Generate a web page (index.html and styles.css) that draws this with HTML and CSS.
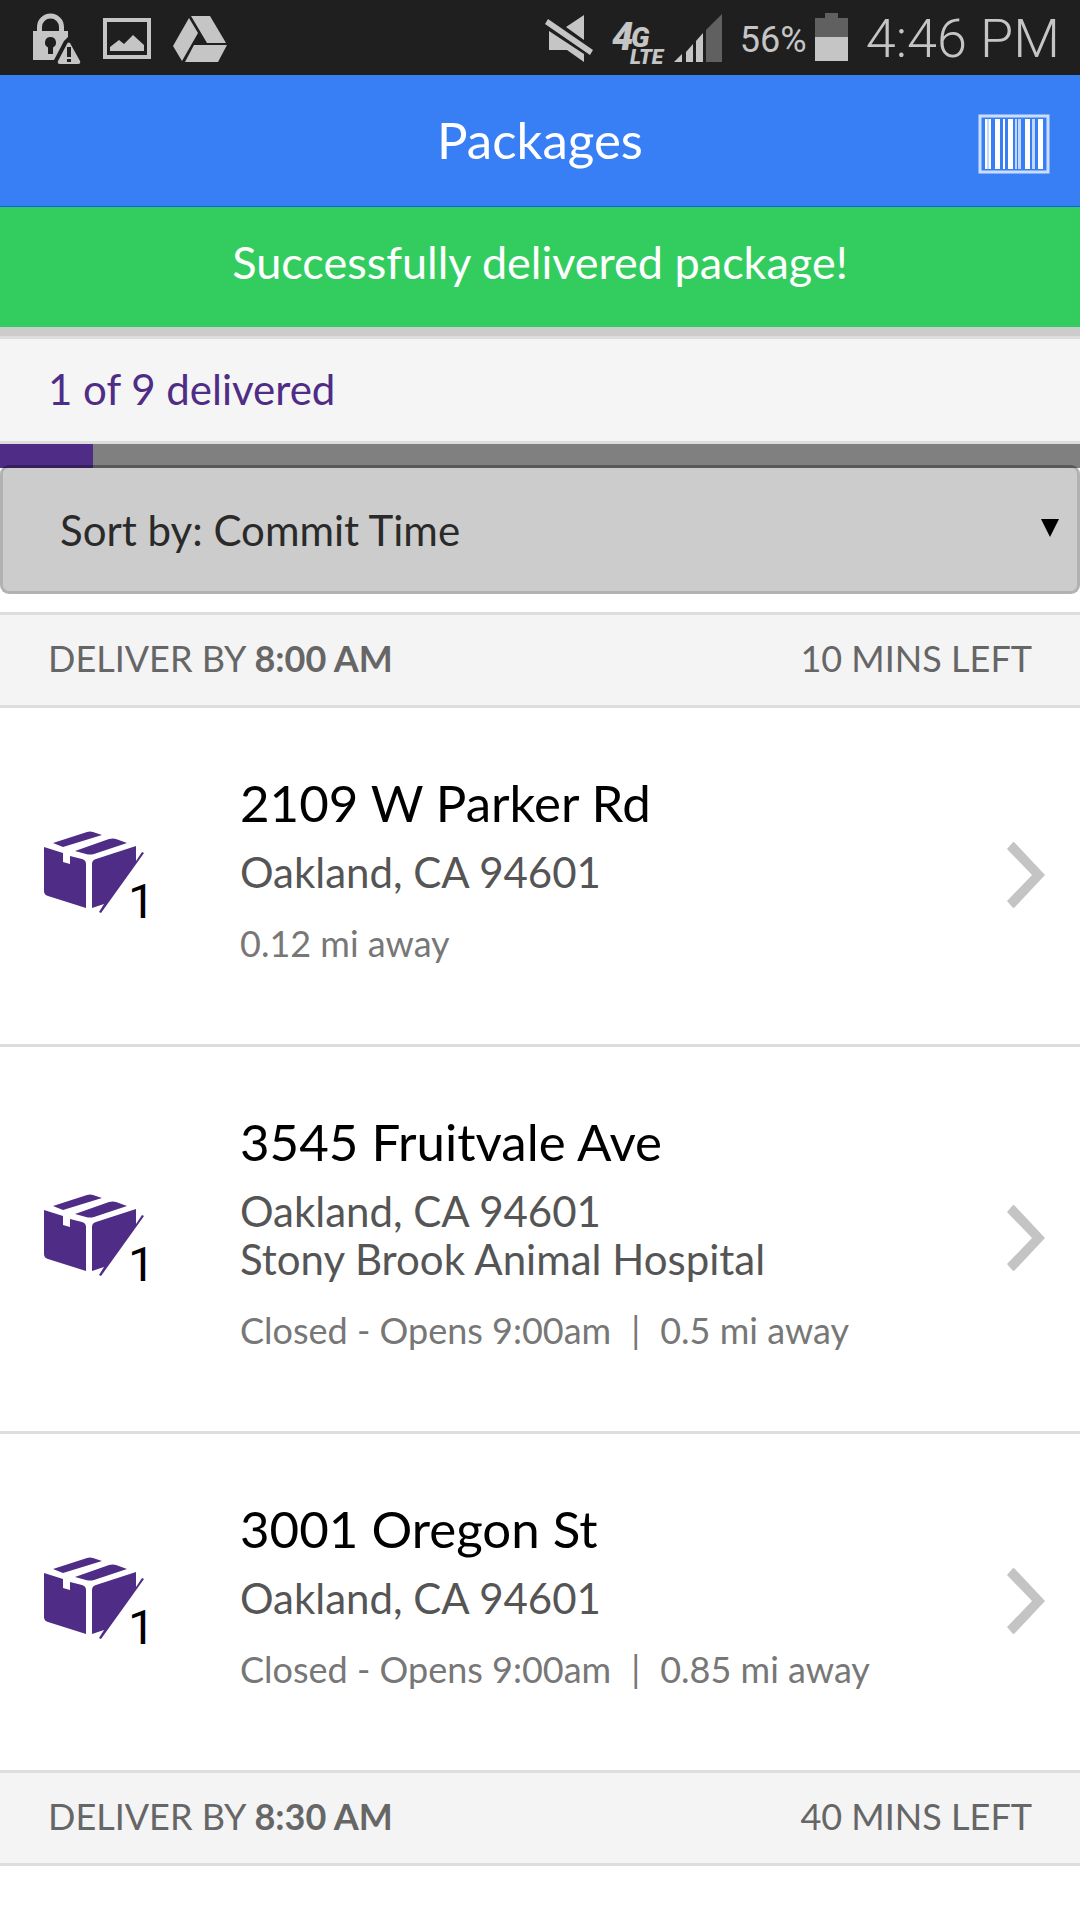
FILE: index.html
```html
<!DOCTYPE html>
<html lang="en">
<head>
<meta charset="utf-8">
<meta name="viewport" content="width=device-width">
<title>Packages</title>
<link rel="stylesheet" href="styles.css">
</head>
<body>
<svg class="defs" aria-hidden="true">
  <symbol id="box" viewBox="0 0 106 90">
    <path d="M9 12 43 1q3-1 6 0L58 4 19 16z M31 20 65 8q4-1 7 0L83 12 50 23q-4 1-8 0z M0 16 19 22V31l7 2V25L38 28q4 1 4 5V77L4 65q-4-1-4-5z M48 77V33q0-4 4-5L92 15V30L98 21 100 22 57 82 55 81 60 73z"/>
  </symbol>
  <symbol id="chevron" viewBox="0 0 38 66">
    <path d="M0 7 6 0q1 0 2 1L38 33 8 65q-1 1-2 1L0 59 25 33z"/>
  </symbol>
</svg>

<div class="status">
  <div class="status-left">
    <svg width="48" height="75" viewBox="0 0 48 75" aria-hidden="true">
      <path fill="none" stroke="currentColor" stroke-width="5" d="M6.500 32V27a11 11 0 0 1 22 0v5"/>
      <path fill="currentColor" fill-rule="evenodd" d="M0 31H35V37L31 41 21 60H0z M17.500 37a5.500 5.500 0 0 0-2.500 10.400V54h5V47.400a5.500 5.500 0 0 0-2.500-10.400z"/>
      <path fill="currentColor" fill-rule="evenodd" d="M34.500 43q1-1 2.500 0L47 61q1 3-2 3H27q-3 0-2-3z M34 47v10h4V47z M34 59v3h4v-3z"/>
    </svg>
    <svg width="48" height="75" viewBox="0 0 48 75" aria-hidden="true">
      <path fill="none" stroke="currentColor" stroke-width="4" d="M2 20H46V57H2z"/>
      <path fill="currentColor" d="M7 51V47L16 40 21 44 30 35 41 45V51z"/>
    </svg>
    <svg width="54" height="75" viewBox="0 0 54 75" aria-hidden="true">
      <path fill="currentColor" d="M16 18 25 33 9 61 0 46z M18 16H37L53 43H34z M21 45H54L45 62H12z"/>
    </svg>
  </div>
  <div class="status-right">
    <svg width="49" height="75" viewBox="0 0 49 75" aria-hidden="true">
      <path fill="currentColor" d="M39 15V40L21 27z M4 31 39 54V62L22 50H4z M3 19 48 50 45 55 0 24z"/>
    </svg>
    <svg class="network" width="54" height="75" viewBox="0 0 54 75" role="img" aria-label="4G LTE">
      <text x="0" y="50" font-size="38">4</text>
      <text x="19" y="47" font-size="28">G</text>
      <text x="18" y="64" font-size="21">LTE</text>
    </svg>
    <svg width="48" height="75" viewBox="0 0 48 75" aria-hidden="true">
      <path fill="currentColor" d="M8 54V62H0z M12 52 19 44V62H12z M22 41 29 33V62H22z"/>
      <path fill="#606060" d="M32 30 48 14V62H32z"/>
    </svg>
    <span class="percent">56%</span>
    <svg width="33" height="75" viewBox="0 0 33 75" aria-hidden="true">
      <path fill="#606060" d="M10 13H23V18H33V37H0V18H10z"/>
      <path fill="currentColor" d="M0 37H33V61H0z"/>
    </svg>
    <span class="clock">4:46 PM</span>
  </div>
</div>

<header class="header">
  <h1>Packages</h1>
  <button class="scan" type="button" aria-label="Scan barcode">
    <svg width="72" height="60" viewBox="0 0 72 60" aria-hidden="true">
      <path fill="none" stroke="#fff" stroke-opacity=".75" stroke-width="3" d="M2 2H70V58H2z"/>
      <path fill="#fff" d="M7 5h2v50H7z M11 5h2v50h-2z M17 5h5v50h-5z M25 5h2v50h-2z M30 5h5v50h-5z M47 5h5v50h-5z M60 5h5v50h-5z"/>
      <path fill="#fff" fill-opacity=".7" d="M9 5h2v50H9z M37 5h2v50h-2z M40 5h3v50h-3z M54 5h3v50h-3z"/>
    </svg>
  </button>
</header>

<p class="toast" role="status">Successfully delivered package!</p>

<main>
  <p class="summary" id="summary">1 of 9 delivered</p>
  <div class="progress" role="progressbar" aria-labelledby="summary" aria-valuemin="0" aria-valuemax="9" aria-valuenow="1"><div class="progress-fill"></div></div>

  <div class="sort">
    <select aria-label="Sort packages">
      <option>Sort by: Commit Time</option>
      <option>Sort by: Distance</option>
    </select>
    <svg width="18" height="18" viewBox="0 0 18 18" aria-hidden="true"><path d="M0 0H18L9 18z"/></svg>
  </div>

  <h2 class="divider"><span>DELIVER BY <b>8:00 AM</b></span><span>10 MINS LEFT</span></h2>

  <a class="item" href="#parker">
    <span class="parcel"><svg width="106" height="90" aria-hidden="true"><use href="#box"/></svg><span class="count">1</span></span>
    <span class="info">
      <span class="street">2109 W Parker Rd</span>
      <span class="place">Oakland, CA 94601</span>
      <span class="meta"><span>0.12 mi away</span></span>
    </span>
    <svg class="chevron" width="38" height="66" aria-hidden="true"><use href="#chevron"/></svg>
  </a>

  <a class="item" href="#fruitvale">
    <span class="parcel"><svg width="106" height="90" aria-hidden="true"><use href="#box"/></svg><span class="count">1</span></span>
    <span class="info">
      <span class="street">3545 Fruitvale Ave</span>
      <span class="place">Oakland, CA 94601<br>Stony Brook Animal Hospital</span>
      <span class="meta"><span>Closed - Opens 9:00am</span><span>|</span><span>0.5 mi away</span></span>
    </span>
    <svg class="chevron" width="38" height="66" aria-hidden="true"><use href="#chevron"/></svg>
  </a>

  <a class="item" href="#oregon">
    <span class="parcel"><svg width="106" height="90" aria-hidden="true"><use href="#box"/></svg><span class="count">1</span></span>
    <span class="info">
      <span class="street">3001 Oregon St</span>
      <span class="place">Oakland, CA 94601</span>
      <span class="meta"><span>Closed - Opens 9:00am</span><span>|</span><span>0.85 mi away</span></span>
    </span>
    <svg class="chevron" width="38" height="66" aria-hidden="true"><use href="#chevron"/></svg>
  </a>

  <h2 class="divider"><span>DELIVER BY <b>8:30 AM</b></span><span>40 MINS LEFT</span></h2>
</main>
</body>
</html>
```
FILE: styles.css
```css
* {
  box-sizing: border-box;
}

body {
  margin: 0;
  background: #fff;
  color: #000;
  font-family: Lato, "Liberation Sans", sans-serif;
  font-size: 42px;
  line-height: 48px;
}

h1,
h2,
p {
  margin: 0;
  font-weight: 400;
}

svg {
  display: block;
  flex: none;
}

.defs {
  display: none;
}

/* System status bar */
.status {
  display: flex;
  justify-content: space-between;
  height: 75px;
  padding: 0 20px 0 33px;
  background: #1f1f1f;
  color: #c5c5c5;
  font-family: Roboto, sans-serif;
  white-space: nowrap;
}

.status-left,
.status-right {
  display: flex;
  align-items: center;
}

.status-left {
  gap: 22px;
}

.status-right {
  gap: 8px;
}

.network {
  margin-left: 10px;
  fill: currentColor;
  font-weight: 900;
  font-style: italic;
}

.percent {
  margin-left: 10px;
  padding-top: 4px;
  font-size: 36px;
}

.clock {
  margin-left: 10px;
  padding-top: 2px;
  font-size: 54px;
  font-weight: 300;
}

/* App header */
.header {
  display: grid;
  grid-template-columns: 1fr auto 1fr;
  align-items: center;
  height: 132px;
  padding: 0 30px;
  border-bottom: 1px solid #0c63ee;
  background: #387ef5;
  color: #fff;
}

.header h1 {
  grid-column: 2;
  padding-bottom: 2px;
  font-size: 51px;
  line-height: 60px;
}

.scan {
  justify-self: end;
  padding: 6px 0 0;
  border: 0;
  background: none;
}

.toast {
  padding: 31px 0 41px;
  background: #33cd5f;
  color: #fff;
  font-size: 45px;
  text-align: center;
}

/* Delivery progress */
.summary {
  padding: 26px 48px 28px;
  border-top: 3px solid #ddd;
  border-bottom: 3px solid #ddd;
  background: #f5f5f5;
  box-shadow: 0 -9px #ccc;
  margin-top: 9px;
  color: #4f2c85;
}

.progress {
  height: 24px;
  background: #808080;
}

.progress-fill {
  width: 93px;
  height: 100%;
  background: #4f2c85;
}

/* Sort drop-down */
.sort {
  display: grid;
  align-items: center;
  margin: -3px 0 18px;
}

.sort > * {
  grid-area: 1 / 1;
}

.sort select {
  width: 100%;
  height: 129px;
  padding: 0 60px 0 57px;
  border: 3px solid rgba(0, 0, 0, .3);
  border-radius: 9px;
  background: #ccc;
  background-clip: padding-box;
  color: #2a2a2a;
  font: inherit;
  appearance: none;
}

.sort svg {
  justify-self: end;
  margin: 0 21px 3px 0;
  pointer-events: none;
}

/* Package list */
.divider {
  display: flex;
  justify-content: space-between;
  padding: 19px 48px 23px;
  border-top: 3px solid #ddd;
  border-bottom: 3px solid #ddd;
  background: #f4f4f4;
  color: #666;
  font-size: 36px;
}

.item {
  display: flex;
  align-items: center;
  padding: 0 35px 0 44px;
  border-bottom: 3px solid #ddd;
  color: inherit;
  text-decoration: none;
}

.item:has(+ .divider) {
  border-bottom: 0;
}

.parcel {
  position: relative;
  flex: none;
  width: 196px;
  fill: #4f2c85;
}

.count {
  position: absolute;
  left: 84px;
  bottom: -5px;
  font-family: Roboto, sans-serif;
  font-size: 48px;
  line-height: 48px;
}

.info {
  display: flex;
  flex: 1;
  flex-direction: column;
  padding: 65px 0 77px;
}

.street {
  margin-bottom: 15px;
  font-size: 51px;
  line-height: 60px;
}

.place {
  margin-bottom: 23px;
  color: #555;
}

.meta {
  display: flex;
  gap: 20px;
  color: #777;
  font-size: 36px;
}

.chevron {
  margin-bottom: 2px;
  fill: #c4c4c4;
}
```
